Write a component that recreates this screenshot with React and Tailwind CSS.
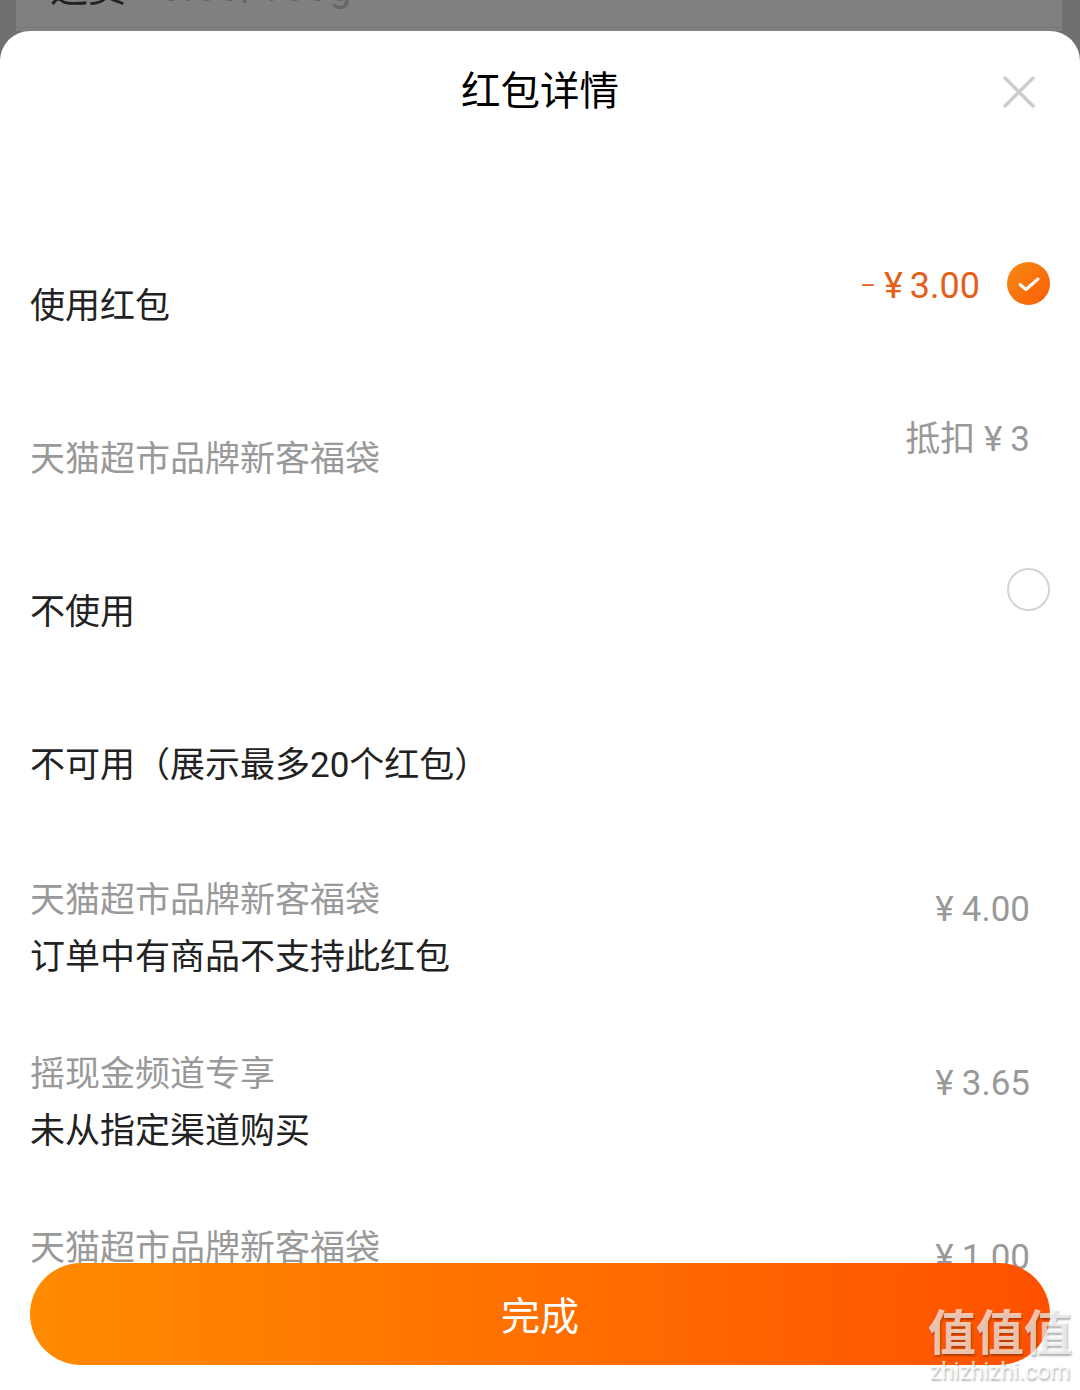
const font = { fontFamily: '"Roboto", "Noto Sans CJK SC", sans-serif' };

function Row({ label, sub, right, pad }) {
  return (
    <div className={`flex items-center justify-between pl-[30px] ${pad}`}>
      <div className="flex flex-col">
        {label}
        {sub}
      </div>
      {right}
    </div>
  );
}

const Dark = ({ children }) => <div className="text-[35px] leading-[57px] text-[#222222]">{children}</div>;
const Gray = ({ children }) => <div className="text-[35px] leading-[57px] text-[#999999]">{children}</div>;
const Value = ({ children }) => <div className="-mt-[40px] mr-[50px] text-[35px] leading-[57px] text-[#999999]">{children}</div>;
const Yen = () => <span className="mr-[8px]">¥</span>;

export default function App() {
  return (
    <div style={font} className="relative h-[1390px] w-[1080px] overflow-hidden bg-[#707070]">
      <div className="ml-[16px] mr-[18px] h-[31px] bg-[#808080] pb-[3px]">
        <div className="flex h-[28px] items-end overflow-hidden border-b border-[#777777] pl-[34px]">
          <div className="mb-[19px] shrink-0 text-[38px] leading-[40px] text-[#222222]">
            运费<span className="ml-[34px] tracking-[2px] text-[#666666]">0.00/100g</span>
          </div>
        </div>
      </div>
      <div className="h-[1359px] overflow-hidden rounded-t-[30px] bg-white">
        <div className="relative flex h-[119px] items-center justify-center pt-[2px]">
          <div className="text-[39.5px] leading-[56px] text-black">红包详情</div>
          <svg className="absolute right-[45px] top-[45px]" width="32" height="32" viewBox="0 0 32 32" fill="none" stroke="#cccccc" strokeWidth="3.5" strokeLinecap="round">
            <path d="M2 2 L30 30 M30 2 L2 30" />
          </svg>
        </div>
        <div className="pt-[128px]">
          <Row
            pad="pb-[96px]"
            label={<Dark>使用红包</Dark>}
            right={
              <div className="-mt-[40px] mr-[30px] flex items-center gap-[27px]">
                <div className="flex items-center text-[36px] leading-[57px] text-[#e4601a]">
                  <span className="mr-[8px] text-[24px]">–</span>
                  <span className="mr-[7px]">¥</span>3.00
                </div>
                <div className="mb-[6px] flex h-[43px] w-[43px] items-center justify-center rounded-full bg-gradient-to-br from-[#f58a14] to-[#fb5a05]">
                  <svg width="24" height="20" viewBox="0 0 24 20" fill="none" stroke="#ffffff" strokeWidth="3" strokeLinecap="round" strokeLinejoin="round">
                    <path d="M3 10.5 L9 15.5 L21 5" />
                  </svg>
                </div>
              </div>
            }
          />
          <Row pad="pb-[96px]" label={<Gray>天猫超市品牌新客福袋</Gray>} right={<Value>抵扣 <Yen />3</Value>} />
          <Row
            pad="pb-[96px]"
            label={<Dark>不使用</Dark>}
            right={<div className="-mt-[46px] mr-[30px] h-[43px] w-[43px] rounded-full border-2 border-[#d4d4d4]" />}
          />
          <div className="pb-[78px] pl-[30px] text-[35px] leading-[57px] text-[#222222]">不可用（展示最多20个红包）</div>
          <Row pad="pb-[60px]" label={<Gray>天猫超市品牌新客福袋</Gray>} sub={<Dark>订单中有商品不支持此红包</Dark>} right={<Value><Yen />4.00</Value>} />
          <Row pad="pb-[60px]" label={<Gray>摇现金频道专享</Gray>} sub={<Dark>未从指定渠道购买</Dark>} right={<Value><Yen />3.65</Value>} />
          <Row pad="pb-[60px]" label={<Gray>天猫超市品牌新客福袋</Gray>} sub={<div className="h-[57px]" />} right={<Value><Yen />1.00</Value>} />
        </div>
      </div>
      <div className="absolute bottom-[25px] left-[30px] right-[30px] flex h-[102px] items-center justify-center rounded-full bg-gradient-to-r from-[#ff8a00] to-[#ff5000] pt-[7px] text-[39px] text-white">
        完成
      </div>
      <div className="absolute bottom-[6px] right-[8px] flex flex-col items-center [text-shadow:1px_2px_2px_rgba(0,0,0,0.3)]">
        <div className="text-[48px] font-bold leading-[52px] text-white/70">值值值</div>
        <div className="text-[23px] leading-[24px] text-white/80">zhizhizhi.com</div>
      </div>
    </div>
  );
}
